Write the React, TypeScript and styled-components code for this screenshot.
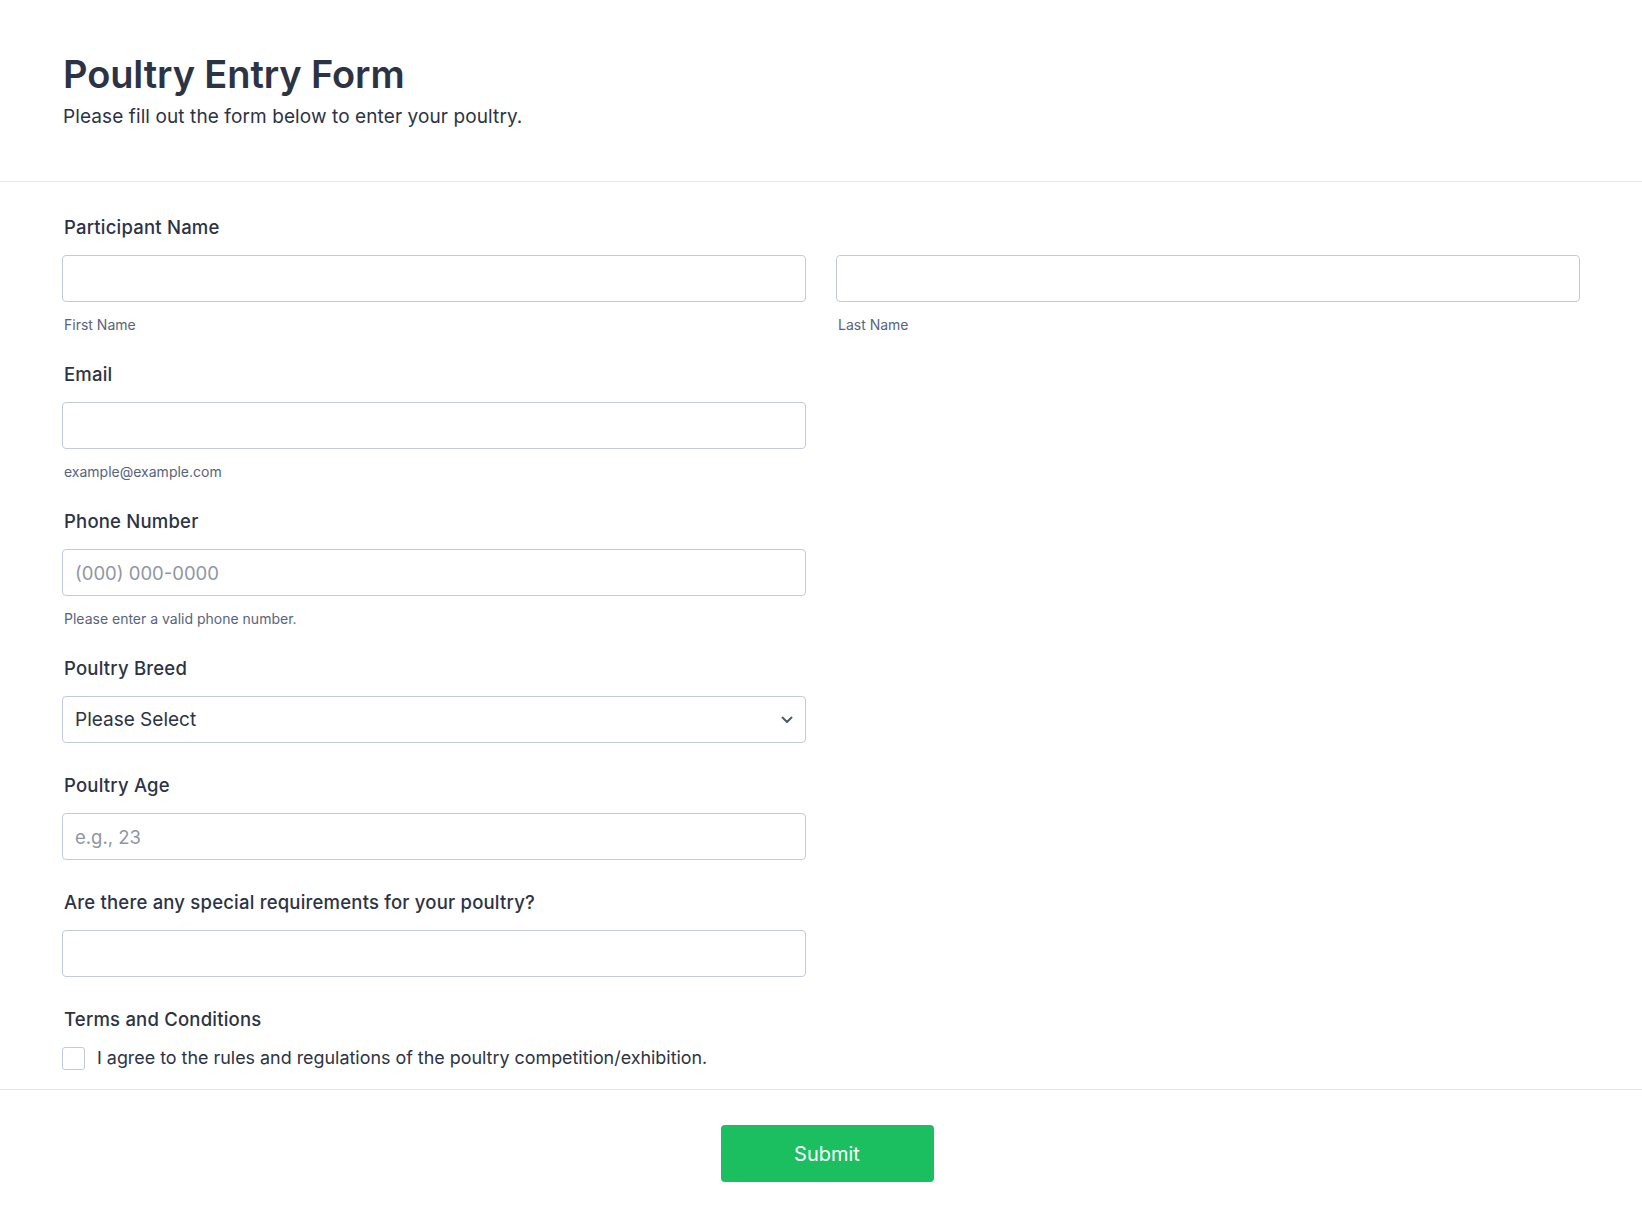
import React from "react";
import styled, { createGlobalStyle } from "styled-components";

const Global = createGlobalStyle`
  html, body { margin: 0; padding: 0; background: #ffffff; }
  body { font-family: Inter, "Noto Sans", "Liberation Sans", sans-serif; color: #2c3345; }
  * { box-sizing: border-box; }
`;

const Page = styled.div`
  width: 100%;
  min-height: 1230px;
  background: #ffffff;
`;

const Header = styled.header`
  padding: 52px 62px 51px 63px;
  border-bottom: 1px solid #e3e5ec;
`;

const Title = styled.h1`
  margin: 0;
  font-size: 38px;
  line-height: 44px;
  font-weight: 600;
  color: #2c3345;
  letter-spacing: -0.1px;
`;

const Subtitle = styled.p`
  margin: 8px 0 0;
  font-size: 19px;
  line-height: 26px;
  font-weight: 400;
  letter-spacing: 0.1px;
  color: #2c3345;
`;

const FormBody = styled.div`
  padding: 33px 62px 19px 62px;
  border-bottom: 1px solid #e3e5ec;
`;

const Field = styled.div<{ $half?: boolean }>`
  padding-bottom: 30px;
  width: ${(p) => (p.$half ? "744px" : "100%")};
`;

const Label = styled.div`
  font-size: 18.5px;
  line-height: 24px;
  font-weight: 500;
  letter-spacing: 0.2px;
  color: #2c3345;
  margin: 0 0 16px 2px;
`;

const TermsLabel = styled(Label)`
  margin-bottom: 15px;
`;

const Row = styled.div`
  display: grid;
  grid-template-columns: 1fr 1fr;
  column-gap: 30px;
`;

const Input = styled.input`
  display: block;
  width: 100%;
  height: 47px;
  border: 1px solid #c3cad8;
  border-radius: 4px;
  padding: 0 12px;
  font-family: inherit;
  font-size: 18.5px;
  color: #2c3345;
  background: #fff;
  outline: none;
  &::placeholder { color: #8f96a3; }
`;

const Sub = styled.div`
  margin: 13px 0 -3px 2px;
  font-size: 14px;
  line-height: 20px;
  color: #57647e;
`;

const SelectBox = styled.div`
  display: flex;
  align-items: center;
  justify-content: space-between;
  height: 47px;
  border: 1px solid #c3cad8;
  border-radius: 4px;
  padding: 0 12px 0 12px;
  font-size: 19px;
  color: #2c3345;
  background: #fff;
`;

const CheckRow = styled.label`
  display: flex;
  align-items: center;
  gap: 12px;
  margin-top: 1px;
`;

const Box = styled.span`
  width: 23px;
  height: 23px;
  border: 1px solid #c3cad8;
  border-radius: 3px;
  background: #fff;
  flex: none;
`;

const CheckText = styled.span`
  font-size: 17.9px;
  line-height: 24px;
  color: #2c3345;
`;

const TermsField = styled.div``;

const Footer = styled.div`
  display: flex;
  justify-content: center;
  padding: 35px 0 47px 12px;
`;

const SubmitButton = styled.button`
  width: 213px;
  height: 57px;
  border: none;
  border-radius: 4px;
  background: #1bbf5f;
  color: #ffffff;
  font-family: inherit;
  font-size: 20px;
  font-weight: 400;
  cursor: pointer;
`;

const Chevron = () => (
  <svg width="12" height="8" viewBox="0 0 12 8" fill="none">
    <path d="M1.5 1.5L6 6L10.5 1.5" stroke="#4f5b70" strokeWidth="2" strokeLinecap="round" strokeLinejoin="round" />
  </svg>
);

export default function App() {
  return (
    <Page>
      <Global />
      <Header>
        <Title>Poultry Entry Form</Title>
        <Subtitle>Please fill out the form below to enter your poultry.</Subtitle>
      </Header>
      <FormBody>
        <Field>
          <Label>Participant Name</Label>
          <Row>
            <div>
              <Input type="text" />
              <Sub>First Name</Sub>
            </div>
            <div>
              <Input type="text" />
              <Sub>Last Name</Sub>
            </div>
          </Row>
        </Field>
        <Field $half>
          <Label>Email</Label>
          <Input type="email" />
          <Sub>example@example.com</Sub>
        </Field>
        <Field $half>
          <Label>Phone Number</Label>
          <Input type="tel" placeholder="(000) 000-0000" />
          <Sub>Please enter a valid phone number.</Sub>
        </Field>
        <Field $half>
          <Label>Poultry Breed</Label>
          <SelectBox>
            <span>Please Select</span>
            <Chevron />
          </SelectBox>
        </Field>
        <Field $half>
          <Label>Poultry Age</Label>
          <Input type="text" placeholder="e.g., 23" />
        </Field>
        <Field $half>
          <Label>Are there any special requirements for your poultry?</Label>
          <Input type="text" />
        </Field>
        <TermsField>
          <TermsLabel>Terms and Conditions</TermsLabel>
          <CheckRow>
            <Box />
            <CheckText>I agree to the rules and regulations of the poultry competition/exhibition.</CheckText>
          </CheckRow>
        </TermsField>
      </FormBody>
      <Footer>
        <SubmitButton type="button">Submit</SubmitButton>
      </Footer>
    </Page>
  );
}
